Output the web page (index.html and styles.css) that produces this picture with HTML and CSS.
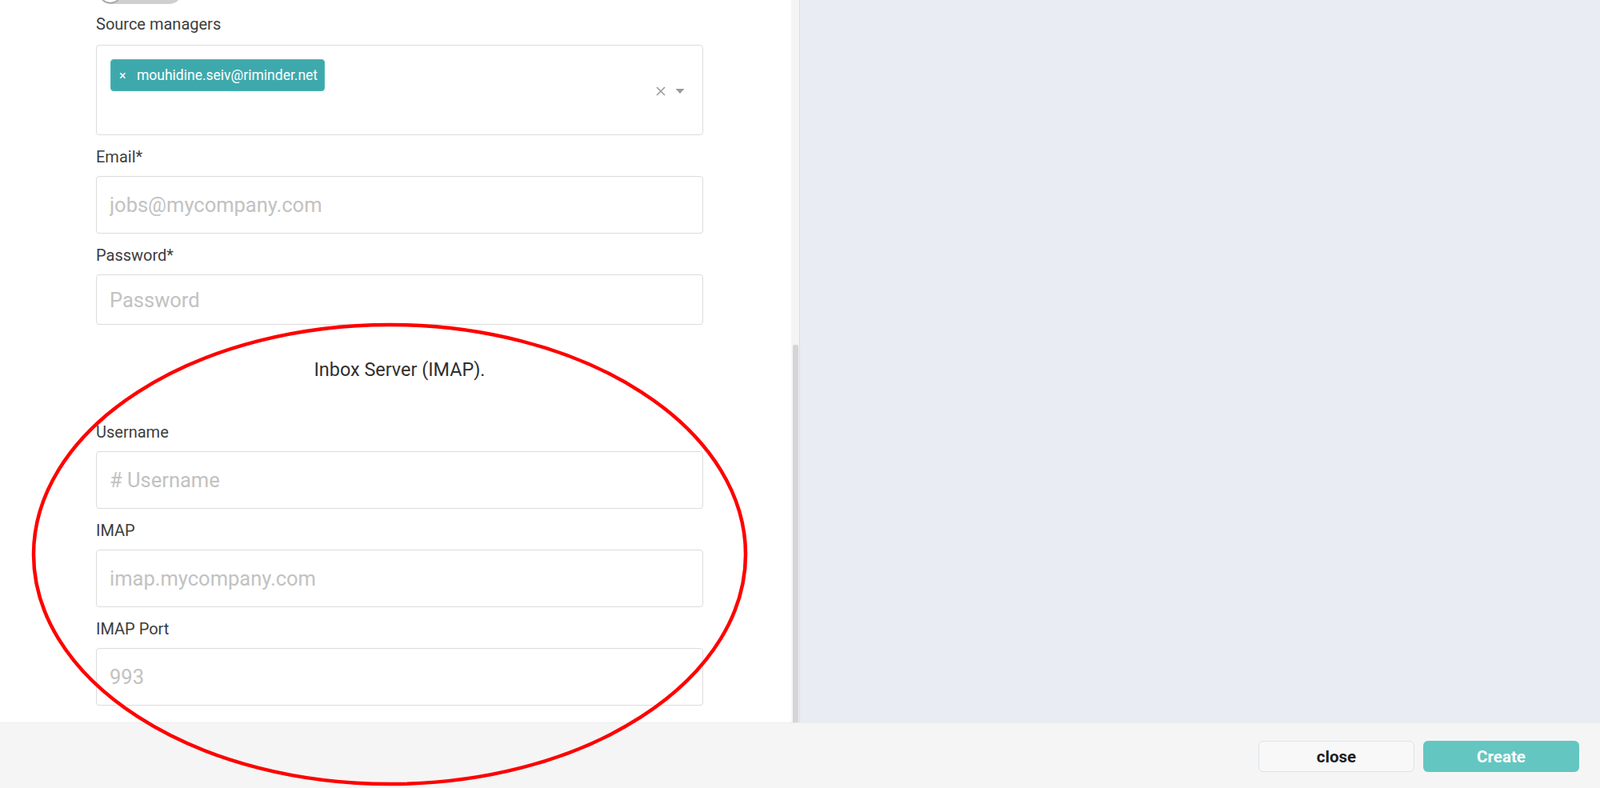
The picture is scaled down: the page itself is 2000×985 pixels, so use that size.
FILE: index.html
```html
<!DOCTYPE html>
<html lang="en">
<head>
<meta charset="utf-8">
<title>Source settings</title>
<link rel="stylesheet" href="styles.css">
</head>
<body>
<div class="app">
  <div class="main">
    <div class="left">
      <div class="scroll">
        <div class="form">
          <div class="toggle"><span class="knob"></span></div>

          <div class="field field-top">
            <label class="label">Source managers</label>
            <div class="select">
              <div class="tags">
                <span class="tag"><span class="tag-x">×</span><span class="tag-text">mouhidine.seiv@riminder.net</span></span>
              </div>
              <div class="select-icons">
                <svg class="clear" width="14" height="14" viewBox="0 0 14 14"><path d="M2 2 L12 12 M12 2 L2 12" stroke="#9a9a9a" stroke-width="1.6" fill="none"/></svg>
                <svg class="caret" width="12" height="8" viewBox="0 0 12 8"><path d="M0.5 1 L11.5 1 L6 7 Z" fill="#9a9a9a"/></svg>
              </div>
            </div>
          </div>

          <div class="field">
            <label class="label">Email*</label>
            <input class="input" type="text" placeholder="jobs@mycompany.com">
          </div>

          <div class="field">
            <label class="label">Password*</label>
            <input class="input input-short" type="password" placeholder="Password">
          </div>

          <h3 class="section">Inbox Server (IMAP).</h3>

          <div class="field field-first">
            <label class="label">Username</label>
            <input class="input" type="text" placeholder="# Username">
          </div>

          <div class="field">
            <label class="label">IMAP</label>
            <input class="input" type="text" placeholder="imap.mycompany.com">
          </div>

          <div class="field">
            <label class="label">IMAP Port</label>
            <input class="input" type="text" placeholder="993">
          </div>
        </div>
      </div>
      <div class="scrollbar"><div class="thumb"></div></div>
    </div>
    <div class="right"></div>
  </div>
  <div class="footer">
    <button class="btn btn-close">close</button>
    <button class="btn btn-create">Create</button>
  </div>
  <svg class="annotation" width="2000" height="985" viewBox="0 0 2000 985">
    <ellipse cx="487" cy="693" rx="445" ry="287" fill="none" stroke="#ff0000" stroke-width="4.5"/>
  </svg>
</div>
</body>
</html>
```

FILE: styles.css
```css
* { box-sizing: border-box; }

html, body {
  margin: 0;
  padding: 0;
  width: 2000px;
  height: 985px;
  overflow: hidden;
  font-family: Roboto, "Liberation Sans", Arial, sans-serif;
  color: #3b3b3b;
  background: #ffffff;
}

.app {
  position: relative;
  width: 2000px;
  height: 985px;
  display: flex;
  flex-direction: column;
}

.main {
  flex: 1;
  display: flex;
  min-height: 0;
}

.left {
  width: 1000px;
  display: flex;
  background: #ffffff;
}

.scroll {
  flex: 1;
  overflow: hidden;
}

.form {
  width: 759px;
  margin-left: 120px;
}

.toggle {
  width: 104px;
  height: 30px;
  margin-top: -25px;
  margin-left: 3px;
  border-radius: 15px;
  background: #cfcfcf;
  display: flex;
  align-items: center;
  padding-left: 2px;
}

.knob {
  width: 26px;
  height: 26px;
  border-radius: 50%;
  background: #ffffff;
  box-shadow: 0 1px 2px rgba(0, 0, 0, 0.35);
}

.field {
  margin-top: 15px;
  display: flex;
  flex-direction: column;
}

.field-top {
  margin-top: 13px;
}

.field-top .label {
  margin-bottom: 14px;
}

.field-first {
  margin-top: 0;
}

.label {
  display: block;
  font-size: 20px;
  line-height: 24px;
  height: 24px;
  margin-bottom: 12px;
  color: #3d3d3d;
}

.select {
  height: 113px;
  border: 1px solid #dcdcdc;
  border-radius: 4px;
  display: flex;
  padding: 17px 22px 0 17px;
  align-items: flex-start;
}

.tags {
  flex: 1;
  display: flex;
}

.tag {
  height: 40px;
  width: 268px;
  background: #3ea9ad;
  border: 1px solid #4cb4b7;
  border-radius: 4px;
  color: #ffffff;
  display: flex;
  align-items: center;
  font-size: 17.5px;
  padding-left: 10px;
}

.tag-x {
  font-size: 16px;
  width: 22px;
}

.select-icons {
  align-self: center;
  margin-top: -17px;
  display: flex;
  align-items: center;
  gap: 11px;
  padding-top: 2px;
}

.input {
  height: 72px;
  width: 100%;
  border: 1px solid #dcdcdc;
  border-radius: 4px;
  padding: 0 16px;
  font-family: Roboto, "Liberation Sans", Arial, sans-serif;
  font-size: 25.5px;
  color: #333;
  background: #ffffff;
  outline: none;
}

.input-short {
  height: 63px;
}

.input::placeholder {
  color: #c2c2c2;
}

.section {
  margin: 42px 0 52px 0;
  height: 28px;
  line-height: 28px;
  text-align: center;
  font-size: 23.4px;
  font-weight: 400;
  color: #2f2f2f;
}

.scrollbar {
  width: 11px;
  background: #f4f4f4;
  border-right: 1px solid #d6dde5;
  padding: 431px 1px 0 2px;
}

.thumb {
  height: 100%;
  background: #d6d4da;
  border-radius: 2px 2px 0 0;
}

.right {
  flex: 1;
  background: #e9edf3;
}

.footer {
  height: 82px;
  background: #f5f5f5;
  border-top: 1px solid #ececec;
  display: flex;
  justify-content: flex-end;
  align-items: center;
  gap: 11px;
  padding-right: 26px;
  padding-top: 2px;
}

.btn {
  width: 195px;
  height: 39px;
  border-radius: 6px;
  font-family: Roboto, "Liberation Sans", Arial, sans-serif;
  font-size: 20.5px;
  font-weight: 700;
  cursor: pointer;
}

.btn-close {
  background: #f8f8f8;
  border: 1.5px solid #dde2ea;
  color: #1e1e1e;
}

.btn-create {
  background: #64c6c1;
  border: none;
  color: #ffffff;
}

.annotation {
  position: absolute;
  top: 0;
  left: 0;
  pointer-events: none;
}
```
